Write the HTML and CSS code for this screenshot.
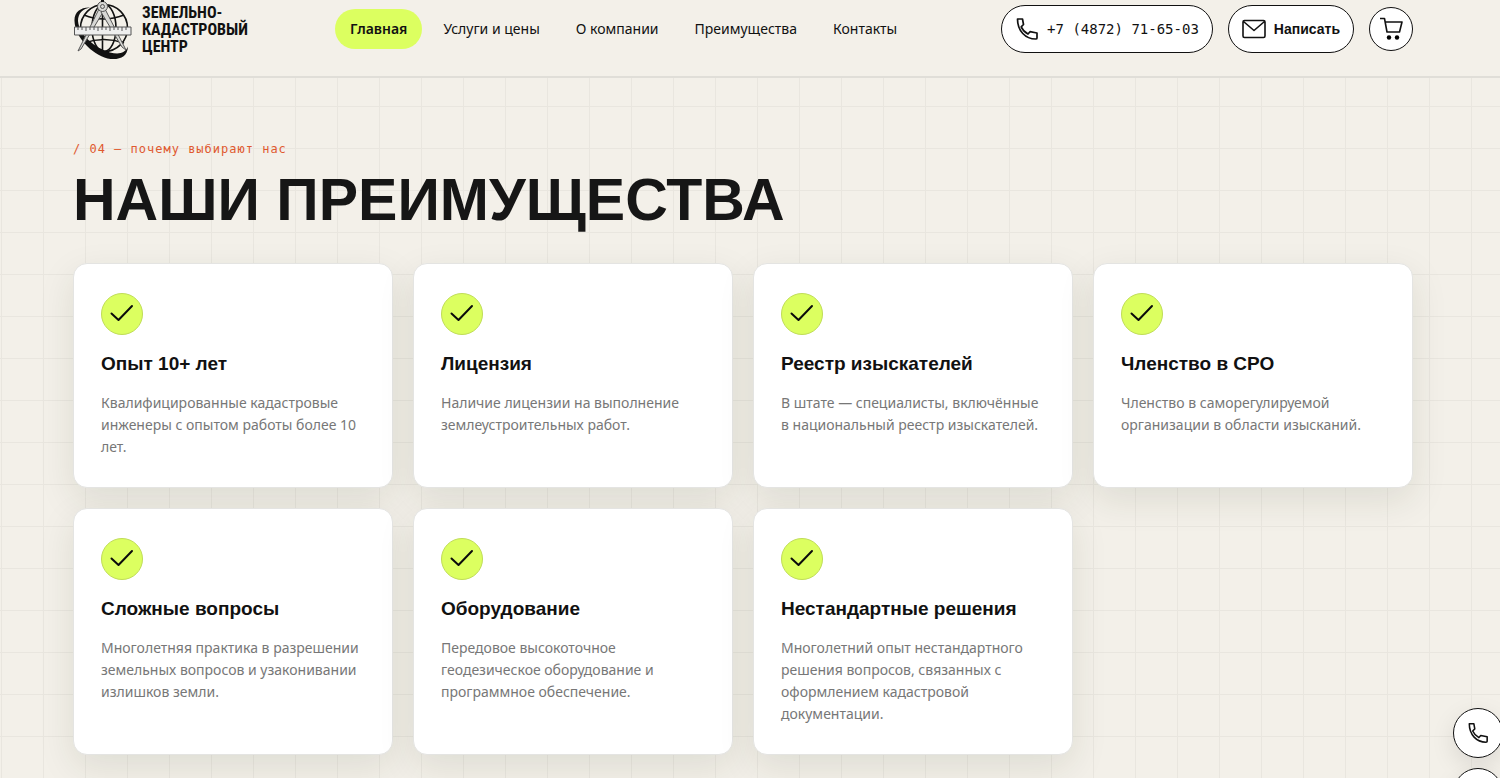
FILE: index.html
```html
<!DOCTYPE html>
<html lang="ru">
<head>
    <meta charset="UTF-8">
    <meta name="viewport" content="width=device-width, initial-scale=1.0">
    <title>Земельно-кадастровый центр</title>
    <link rel="stylesheet" href="styles.css">
</head>
<body>
    <!-- shared icons -->
    <svg class="sprite" aria-hidden="true">
        <symbol id="check" viewBox="0 0 24 24">
            <path d="M1.500 11.500l7 6.500L22 4" fill="none" stroke="#0b0b0b" stroke-width="2" stroke-linecap="round" stroke-linejoin="round"/>
        </symbol>
        <symbol id="phone" viewBox="0 0 24 24">
            <path d="M2.500 2h5l1 5.500-2.300 2.300c1.300 3 3.700 5.400 6.800 7.200l2-2.300 7 1.300v5q0 1-1.300 1C10.500 22 2.500 14 2.500 2z" fill="none" stroke="#111" stroke-width="1.700" stroke-linejoin="round"/>
        </symbol>
    </svg>

    <header class="header">
        <a class="logo" href="#">
            <svg class="logo-mark" viewBox="0 0 60 62" aria-hidden="true">
                <g fill="none" stroke="#111" stroke-width="1.600">
                    <circle cx="31" cy="30" r="23.500"/>
                    <ellipse cx="31" cy="30" rx="12" ry="23.500"/>
                    <path d="M29.500 0v53M11 17q19 8 40 0M11 45q20-7 40 0"/>
                </g>
                <path d="M17 9.500C8 9 1 14 1.500 23c.5 16 17 33 33 37.500 11 2 20-1 20.500-12-3 7-9 8-18 6C22 50 6 37 5 23c0-8 5-12 12-13.500z" fill="#111"/>
                <g fill="#d8d8d5" stroke="#555" stroke-width="1">
                    <path d="M26 11L5 53l3-2 22-37z"/>
                    <path d="M32 11l21 41-4-3-21-35z"/>
                    <path d="M1.500 29h56.500v8H1.500z" fill="#eee"/>
                    <circle cx="29.500" cy="8.500" r="5"/>
                    <circle cx="29.500" cy="8.500" r="2"/>
                </g>
                <path d="M5 29v3M9 29v3M13 29v4M17 29v3M21 29v3M25 29v4M29 29v3M33 29v3M37 29v4M41 29v3M45 29v3M49 29v4M53 29v3" stroke="#555"/>
                <path d="M29.500 0v4" stroke="#111" stroke-width="3"/>
            </svg>
            <span class="logo-text">ЗЕМЕЛЬНО-<br>КАДАСТРОВЫЙ<br>ЦЕНТР</span>
        </a>
        <nav class="nav">
            <a class="active" href="#">Главная</a>
            <a href="#">Услуги и цены</a>
            <a href="#">О компании</a>
            <a href="#">Преимущества</a>
            <a href="#">Контакты</a>
        </nav>
        <div class="actions">
            <a class="btn btn-phone" href="tel:+74872716503">
                <svg viewBox="0 0 24 24" aria-hidden="true"><use href="#phone"/></svg>
                +7 (4872) 71-65-03
            </a>
            <button class="btn btn-write" type="button">
                <svg viewBox="0 0 24 24" aria-hidden="true">
                    <path d="M2.500 3.500h19q1.500 0 1.500 1.500v14q0 1.500-1.500 1.500h-19Q1 20.500 1 19V5q0-1.500 1.500-1.500zM1.500 4.500L12 13.500 22.500 4.500" fill="none" stroke="#111" stroke-width="1.600" stroke-linejoin="round"/>
                </svg>
                Написать
            </button>
            <button class="cart" type="button" aria-label="Корзина">
                <svg viewBox="0 0 24 24" aria-hidden="true">
                    <path d="M1 1.500h4.500L8 15h12.500L23 5H6.500" fill="none" stroke="#111" stroke-width="1.600" stroke-linejoin="round"/>
                    <circle cx="10" cy="20.500" r="2.200"/>
                    <circle cx="18" cy="20.500" r="2.200"/>
                </svg>
            </button>
        </div>
    </header>

    <main class="section">
        <p class="eyebrow">/ 04 — почему выбирают нас</p>
        <h1>НАШИ ПРЕИМУЩЕСТВА</h1>

        <div class="cards">
            <article class="card">
                <span class="badge"><svg><use href="#check"/></svg></span>
                <h2>Опыт 10+ лет</h2>
                <p>Квалифицированные кадастровые инженеры с опытом работы более 10 лет.</p>
            </article>
            <article class="card">
                <span class="badge"><svg><use href="#check"/></svg></span>
                <h2>Лицензия</h2>
                <p>Наличие лицензии на выполнение землеустроительных работ.</p>
            </article>
            <article class="card">
                <span class="badge"><svg><use href="#check"/></svg></span>
                <h2>Реестр изыскателей</h2>
                <p>В штате — специалисты, включённые в национальный реестр изыскателей.</p>
            </article>
            <article class="card">
                <span class="badge"><svg><use href="#check"/></svg></span>
                <h2>Членство в СРО</h2>
                <p>Членство в саморегулируемой организации в области изысканий.</p>
            </article>
            <article class="card">
                <span class="badge"><svg><use href="#check"/></svg></span>
                <h2>Сложные вопросы</h2>
                <p>Многолетняя практика в разрешении земельных вопросов и узаконивании излишков земли.</p>
            </article>
            <article class="card">
                <span class="badge"><svg><use href="#check"/></svg></span>
                <h2>Оборудование</h2>
                <p>Передовое высокоточное геодезическое оборудование и программное обеспечение.</p>
            </article>
            <article class="card">
                <span class="badge"><svg><use href="#check"/></svg></span>
                <h2>Нестандартные решения</h2>
                <p>Многолетний опыт нестандартного решения вопросов, связанных с оформлением кадастровой документации.</p>
            </article>
        </div>
    </main>

    <div class="floating">
        <a href="tel:+74872716503" aria-label="Позвонить"><svg><use href="#phone"/></svg></a>
        <a href="#" aria-label="Написать"></a>
    </div>
</body>
</html>
```
FILE: styles.css
```css
* {
    box-sizing: border-box;
}
body {
    margin: 0;
    font-family: "Noto Sans", sans-serif;
    color: #111;
    background-color: #f3f0e9;
    overflow-x: hidden;
}
h1, h2, p {
    margin: 0;
}
a {
    color: inherit;
    text-decoration: none;
}
.sprite {
    display: none;
}

/* header */
.header {
    display: flex;
    align-items: center;
    height: 78px;
    padding: 0 87px 18px 73px;
    background: #f3f0e9;
    border-bottom: 2px solid #e0ded8;
}
.logo {
    display: flex;
    align-items: center;
    gap: 9px;
    flex: 0 0 262px;
}
.logo-mark {
    width: 60px;
    height: 62px;
}
.logo-text {
    font-family: "Liberation Sans Narrow", "Roboto Condensed", "Liberation Sans", sans-serif;
    font-size: 16px;
    font-weight: bold;
    line-height: 17px;
}
.nav {
    display: flex;
    gap: 6px;
    font-size: 14px;
    white-space: nowrap;
}
.nav a {
    padding: 0 15px;
    line-height: 40px;
    border-radius: 20px;
}
.nav .active {
    font-weight: 600;
    background: #dcff60;
}
.actions {
    display: flex;
    align-items: center;
    gap: 15px;
    margin-left: auto;
}
.btn {
    display: flex;
    align-items: center;
    gap: 8px;
    height: 48px;
    padding: 0 13px;
    color: #111;
    background: #fff;
    border: 1px solid #111;
    border-radius: 24px;
    white-space: nowrap;
}
.btn svg {
    width: 24px;
    height: 24px;
}
.btn-phone {
    font-family: "DejaVu Sans Mono", monospace;
    font-size: 14px;
}
.btn-write {
    font-family: "Liberation Sans", sans-serif;
    font-size: 14px;
    font-weight: bold;
}
.cart {
    display: flex;
    align-items: center;
    justify-content: center;
    width: 44px;
    height: 44px;
    padding: 0;
    background: #fff;
    border: 1px solid #111;
    border-radius: 50%;
}
.cart svg {
    width: 24px;
    height: 24px;
}

/* advantages */
.section {
    padding: 62px 87px 23px 73px;
    background-image:
        linear-gradient(to right, #e9e6df 1px, transparent 1px),
        linear-gradient(to bottom, #e9e6df 1px, transparent 1px);
    background-size: 42px 42px;
    background-position: 1px 28px;
}
.eyebrow {
    margin-bottom: 6px;
    font-family: "DejaVu Sans Mono", monospace;
    font-size: 12px;
    line-height: 18px;
    letter-spacing: 1px;
    color: #e0592f;
}
h1 {
    margin-bottom: 27px;
    font-family: "Liberation Sans", sans-serif;
    font-size: 59px;
    line-height: 72px;
    color: #161616;
}
.cards {
    display: grid;
    grid-template-columns: repeat(4, 1fr);
    gap: 20px;
}
.card {
    padding: 29px 27px;
    background: #fff;
    border: 1px solid #e4e4e2;
    border-radius: 14px;
    box-shadow: 0 12px 36px rgba(40, 50, 20, 0.1);
}
.badge {
    display: flex;
    align-items: center;
    justify-content: center;
    width: 42px;
    height: 42px;
    margin-bottom: 17px;
    background: #dcff60;
    border: 1px solid #c0dd57;
    border-radius: 50%;
}
.badge svg {
    width: 24px;
    height: 24px;
}
.card h2 {
    margin-bottom: 16px;
    font-family: "Liberation Sans", sans-serif;
    font-size: 19px;
    line-height: 24px;
}
.card p {
    font-size: 14px;
    line-height: 22px;
    color: #777;
}

/* quick contacts over the right edge */
.floating {
    position: fixed;
    top: 708px;
    right: -3px;
    display: flex;
    flex-direction: column;
    gap: 10px;
}
.floating a {
    display: flex;
    align-items: center;
    justify-content: center;
    width: 50px;
    height: 50px;
    background: #fff;
    border: 1px solid #111;
    border-radius: 50%;
    box-shadow: 0 8px 24px rgba(0, 0, 0, 0.1);
}
.floating svg {
    width: 22px;
    height: 22px;
}
```
